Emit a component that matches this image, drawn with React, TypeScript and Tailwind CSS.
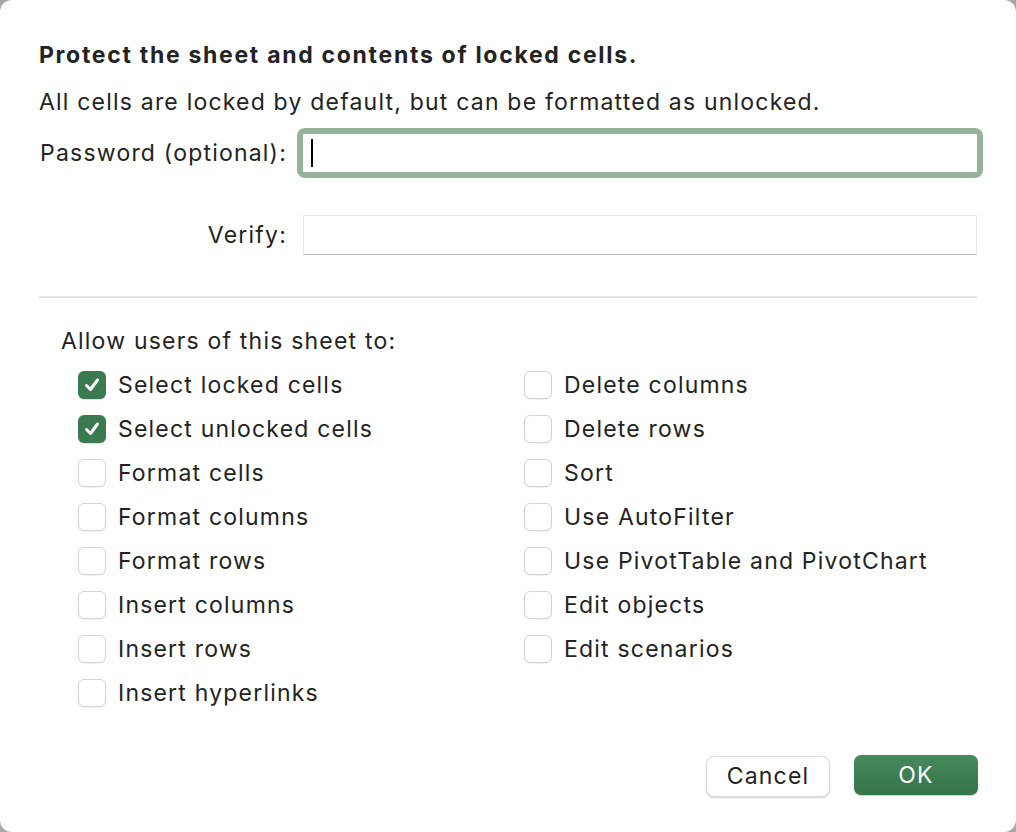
import React from 'react';

const leftOptions = [
  { label: 'Select locked cells', checked: true },
  { label: 'Select unlocked cells', checked: true },
  { label: 'Format cells', checked: false },
  { label: 'Format columns', checked: false },
  { label: 'Format rows', checked: false },
  { label: 'Insert columns', checked: false },
  { label: 'Insert rows', checked: false },
  { label: 'Insert hyperlinks', checked: false }
];

const rightOptions = [
  { label: 'Delete columns', checked: false },
  { label: 'Delete rows', checked: false },
  { label: 'Sort', checked: false },
  { label: 'Use AutoFilter', checked: false },
  { label: 'Use PivotTable and PivotChart', checked: false },
  { label: 'Edit objects', checked: false },
  { label: 'Edit scenarios', checked: false }
];

const Checkbox = ({ label, checked }: { label: string; checked: boolean }) => {
  return (
    <div className="flex h-[44px] items-center gap-[12px]">
      {checked ? (
        <div className="flex h-[28px] w-[28px] items-center justify-center rounded-[6px] bg-[#3b7a50] shadow-[0_1px_1px_rgba(0,0,0,0.15)]">
          <svg width="18" height="18" viewBox="0 0 18 18" fill="none">
            <polyline
              points="3.5,9.5 7.5,13.5 14.5,4"
              stroke="white"
              strokeWidth="3"
              strokeLinecap="round"
              strokeLinejoin="round"
            />
          </svg>
        </div>
      ) : (
        <div className="h-[28px] w-[28px] rounded-[6px] border border-[#d4d4d4] bg-white shadow-[0_1px_1px_rgba(0,0,0,0.06)]" />
      )}
      <span>{label}</span>
    </div>
  );
};

export default function App() {
  return (
    <div className="h-[832px] w-[1016px] bg-[#a8a8a8]">
      <div
        className="h-full w-full rounded-[12px] bg-white pl-[39px] pt-[41px] text-[23px] tracking-[1.2px] text-[#232323]"
        style={{ fontFamily: 'Inter, "Noto Sans", sans-serif' }}
      >
        <p className="font-bold leading-[28px] tracking-[1.7px]">Protect the sheet and contents of locked cells.</p>
        <p className="mt-[19px] leading-[28px]">All cells are locked by default, but can be formatted as unlocked.</p>

        <div className="mt-[12px] flex items-center">
          <label className="w-[248px] text-right leading-[28px]">Password (optional):</label>
          <div className="ml-[10px] rounded-[8px] bg-[#94b39a] p-[6px]">
            <div className="flex h-[38px] w-[674px] items-center bg-white pl-[8px]">
              <div className="h-[28px] w-[2px] bg-black" />
            </div>
          </div>
        </div>

        <div className="mt-[37px] flex items-center">
          <label className="w-[248px] text-right leading-[28px]">Verify:</label>
          <div className="ml-[16px] h-[40px] w-[674px] border border-[#e6e6e6] border-b-[#bdbdbd] bg-white" />
        </div>

        <div className="mt-[41px] h-[2px] w-[938px] bg-[#e4e4e4]" />

        <p className="ml-[22px] mt-[29px] leading-[28px]">Allow users of this sheet to:</p>

        <div className="ml-[39px] mt-[8px] flex">
          <div className="flex w-[446px] flex-col">
            {leftOptions.map((o) => (
              <Checkbox key={o.label} label={o.label} checked={o.checked} />
            ))}
          </div>
          <div className="flex flex-col">
            {rightOptions.map((o) => (
              <Checkbox key={o.label} label={o.label} checked={o.checked} />
            ))}
          </div>
        </div>

        <div className="mt-[40px] flex w-[939px] items-start justify-end gap-[24px]">
          <button className="mt-[1px] h-[41px] w-[124px] rounded-[8px] border border-[#dcdcdc] bg-white text-[23px] tracking-[1.2px] text-[#232323] shadow-[0_1px_2px_rgba(0,0,0,0.2)]">
            Cancel
          </button>
          <button className="h-[40px] w-[124px] rounded-[7px] bg-gradient-to-b from-[#468a5e] to-[#367348] text-[23px] tracking-[1.2px] text-white shadow-[0_1px_1px_rgba(0,0,0,0.2)]">
            OK
          </button>
        </div>
      </div>
    </div>
  );
}
